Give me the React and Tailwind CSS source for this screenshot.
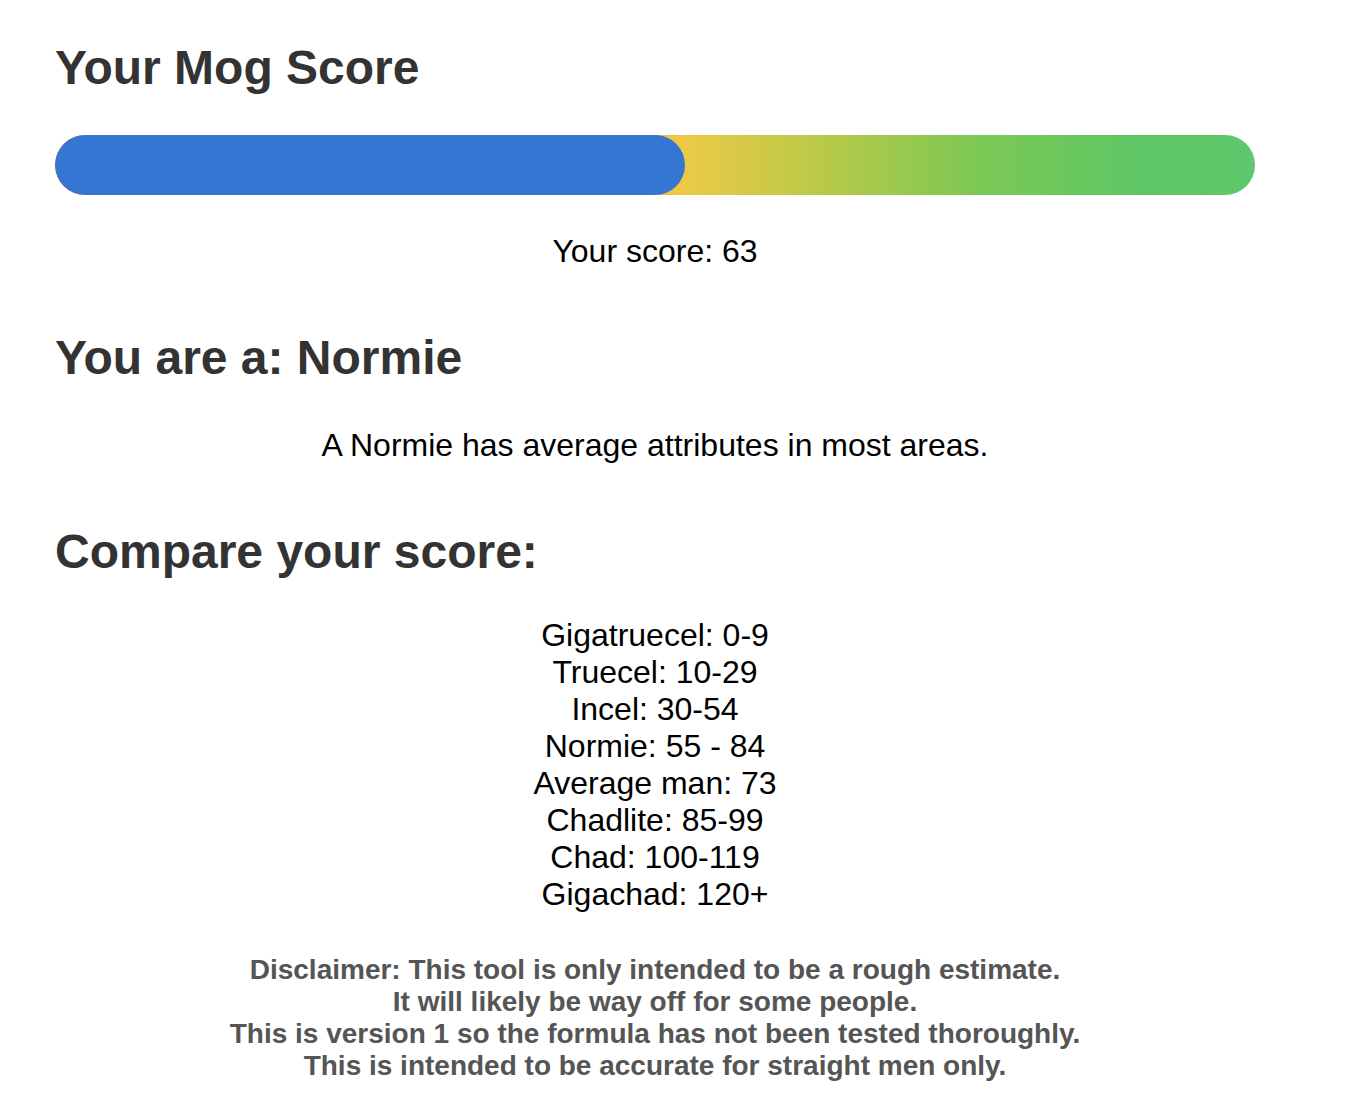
import React from 'react';

const score = 63;
const maxScore = 120;

const ranges = [
    'Gigatruecel: 0-9',
    'Truecel: 10-29',
    'Incel: 30-54',
    'Normie: 55 - 84',
    'Average man: 73',
    'Chadlite: 85-99',
    'Chad: 100-119',
    'Gigachad: 120+',
];

const disclaimer = [
    'Disclaimer: This tool is only intended to be a rough estimate.',
    'It will likely be way off for some people.',
    'This is version 1 so the formula has not been tested thoroughly.',
    'This is intended to be accurate for straight men only.',
];

const ScoreBar = ({ value }) => {
    const pct = Math.min(100, (value / maxScore) * 100);
    return (
        <div className="relative h-[60px] w-full rounded-full overflow-hidden bg-[linear-gradient(to_right,#e8563c_0%,#f0a040_30%,#ecc946_52.5%,#b5ca48_64.6%,#7cc854_77%,#5fc764_89.6%,#5dc86c_100%)]">
            <div className="h-full rounded-full bg-[#3576d3]" style={{ width: `${pct}%` }} />
        </div>
    );
};

const App = () => {
    return (
        <div className="min-h-screen bg-white font-['Liberation_Sans',Arial,sans-serif]">
            <div className="w-[1200px] ml-[55px] pt-[40px] pb-[20px]">
                <h1 className="text-[48px] leading-[56px] font-bold text-[#333]">Your Mog Score</h1>

                <div className="mt-[39px]">
                    <ScoreBar value={score} />
                </div>
                <p className="mt-[38px] text-center text-[32px] leading-[37px] text-black">Your score: {score}</p>

                <h2 className="mt-[60px] text-[48px] leading-[56px] font-bold text-[#333]">You are a: Normie</h2>
                <p className="mt-[41px] text-center text-[32px] leading-[37px] text-black">
                    A Normie has average attributes in most areas.
                </p>

                <h2 className="mt-[60px] text-[48px] leading-[56px] font-bold text-[#333]">Compare your score:</h2>
                <div className="mt-[37px] text-center text-[32px] leading-[37px] text-black">
                    {ranges.map(r => (
                        <div key={r}>{r}</div>
                    ))}
                </div>

                <div className="mt-[41px] text-center text-[28px] leading-[32px] font-bold text-[#555]">
                    {disclaimer.map(line => (
                        <div key={line}>{line}</div>
                    ))}
                </div>
            </div>
        </div>
    );
};

export default App;
